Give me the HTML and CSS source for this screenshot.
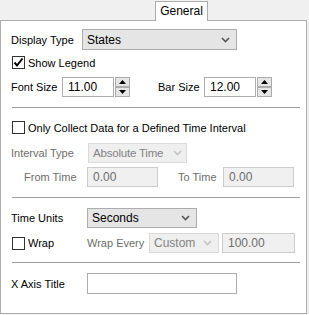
FILE: index.html
```html
<!DOCTYPE html>
<html lang="en">

<head>
    <meta charset="UTF-8">
    <title>General</title>
    <link rel="stylesheet" href="styles.css">
</head>

<body>

    <div class="tabs">
        <div class="tab">General</div>
    </div>

    <div class="panel">
        <!-- display type -->
        <div class="row row-display">
            <span class="label w71">Display Type</span>
            <div class="select sel-display">
                <span>States</span>
                <svg class="chev" width="9" height="6" viewBox="0 0 9 6"><polyline points="1,1 4.5,4.5 8,1" fill="none" stroke="#555" stroke-width="1.6"/></svg>
            </div>
        </div>

        <div class="row row-check">
            <span class="check">
                <svg width="11" height="11" viewBox="0 0 11 11"><polyline points="1.5,5.5 4,8.5 9.5,1.5" fill="none" stroke="#000" stroke-width="2"/></svg>
            </span>
            <span class="label">Show Legend</span>
        </div>

        <div class="row row-size">
            <span class="label w51">Font Size</span>
            <div class="input num">11.00</div>
            <div class="spin">
                <span class="spin-btn"><svg width="7" height="4" viewBox="0 0 7 4"><polygon points="0,4 3.5,0 7,4" fill="#000"/></svg></span>
                <span class="spin-btn"><svg width="7" height="4" viewBox="0 0 7 4"><polygon points="0,0 3.5,4 7,0" fill="#000"/></svg></span>
            </div>
            <span class="label lbl-bar">Bar Size</span>
            <div class="input num">12.00</div>
            <div class="spin">
                <span class="spin-btn"><svg width="7" height="4" viewBox="0 0 7 4"><polygon points="0,4 3.5,0 7,4" fill="#000"/></svg></span>
                <span class="spin-btn"><svg width="7" height="4" viewBox="0 0 7 4"><polygon points="0,0 3.5,4 7,0" fill="#000"/></svg></span>
            </div>
        </div>

        <div class="sep sep1"></div>

        <!-- time interval -->
        <div class="row row-interval">
            <span class="check"></span>
            <span class="label">Only Collect Data for a Defined Time Interval</span>
        </div>

        <div class="row row-itype">
            <span class="label off w76">Interval Type</span>
            <div class="select disabled sel-itype">
                <span>Absolute Time</span>
                <svg class="chev" width="9" height="6" viewBox="0 0 9 6"><polyline points="1,1 4.5,4.5 8,1" fill="none" stroke="#c4c4c4" stroke-width="1.6"/></svg>
            </div>
        </div>

        <div class="row row-from">
            <span class="label off lbl-from">From Time</span>
            <div class="input disabled txt-time">0.00</div>
            <span class="label off lbl-to">To Time</span>
            <div class="input disabled txt-time">0.00</div>
        </div>

        <div class="sep sep2"></div>

        <!-- time units -->
        <div class="row row-units">
            <span class="label w76">Time Units</span>
            <div class="select sel-units">
                <span>Seconds</span>
                <svg class="chev" width="9" height="6" viewBox="0 0 9 6"><polyline points="1,1 4.5,4.5 8,1" fill="none" stroke="#555" stroke-width="1.6"/></svg>
            </div>
        </div>

        <div class="row row-wrap">
            <span class="check"></span>
            <span class="label lbl-wrap">Wrap</span>
            <span class="label off lbl-every">Wrap Every</span>
            <div class="select disabled sel-custom">
                <span>Custom</span>
                <svg class="chev" width="9" height="6" viewBox="0 0 9 6"><polyline points="1,1 4.5,4.5 8,1" fill="none" stroke="#c4c4c4" stroke-width="1.6"/></svg>
            </div>
            <div class="input disabled txt-wrap">100.00</div>
        </div>

        <div class="sep sep3"></div>

        <div class="row row-title">
            <span class="label w76">X Axis Title</span>
            <div class="input txt-title"></div>
        </div>
    </div>

</body>

</html>
```

FILE: styles.css
```css
body {
    font-family: 'Liberation Sans', Arial, sans-serif;
    font-size: 11px;
    color: #000;
    background-color: #f0f0f0;
    margin: 0;
    padding: 0;
    width: 309px;
    height: 315px;
    overflow: hidden;
}

.tabs {
    display: flex;
    height: 20px;
    padding-left: 155px;
}

.tab {
    width: 51px;
    height: 19px;
    margin-top: 1px;
    border: 1px solid #adadad;
    border-bottom: none;
    background-color: #fff;
    text-align: center;
    line-height: 18px;
    font-size: 12px;
    position: relative;
    z-index: 1;
    margin-bottom: -1px;
}

.panel {
    height: 292px;
    border: 1px solid #adadad;
    background-color: #fff;
    padding: 0 0 0 10px;
    box-sizing: content-box;
    width: 295px;
}

.row {
    display: flex;
    align-items: center;
}

.label {
    white-space: nowrap;
}

.off {
    color: #6d6d6d;
}

.w51 { width: 51px; }
.w71 { width: 71px; }
.w76 { width: 76px; }

/* controls */
.select {
    display: flex;
    align-items: center;
    justify-content: space-between;
    box-sizing: border-box;
    height: 21px;
    padding: 0 6px 0 4px;
    border: 1px solid #acacac;
    background-color: #e5e5e5;
    font-size: 12px;
    white-space: nowrap;
}

.select.disabled {
    border-color: #d9d9d9;
    background-color: #efefef;
    color: #838383;
}

.input {
    box-sizing: border-box;
    height: 20px;
    border: 1px solid #abadb3;
    background-color: #fff;
    padding: 0 0 0 5px;
    line-height: 18px;
    font-size: 12px;
}

.input.disabled {
    border-color: #cccccc;
    background-color: #f0f0f0;
    color: #6d6d6d;
}

.check {
    display: flex;
    align-items: center;
    justify-content: center;
    box-sizing: border-box;
    width: 13px;
    height: 13px;
    margin: 0 3px 0 1px;
    border: 1px solid #333;
    background-color: #fff;
}

.spin {
    display: flex;
    flex-direction: column;
    justify-content: space-between;
    width: 15px;
    height: 20px;
    margin-left: 1px;
}

.spin-btn {
    display: flex;
    align-items: center;
    justify-content: center;
    box-sizing: border-box;
    height: 10px;
    border: 1px solid #acacac;
    background-color: #e5e5e5;
}

.sep {
    height: 1px;
    width: 288px;
    margin-left: 1px;
    background-color: #a0a0a0;
}

/* row positions */
.row-display { margin-top: 8px; height: 21px; }
.sel-display { width: 155px; }

.row-check { margin-top: 6px; height: 13px; }

.row-size { margin-top: 8px; height: 20px; }
.row-size .num { width: 52px; }
.lbl-bar { margin-left: 28px; width: 46px; }

.sep1 { margin-top: 10px; }

.row-interval { margin-top: 13px; height: 13px; }

.row-itype { margin-top: 9px; height: 20px; }
.sel-itype { width: 99px; height: 20px; margin-left: 1px; font-size: 11.5px; letter-spacing: -0.2px; padding-right: 4px; }

.row-from { margin-top: 4px; height: 20px; }
.lbl-from { margin-left: 13px; width: 63px; }
.txt-time { width: 71px; }
.lbl-to { margin-left: 20px; width: 45px; }

.sep2 { margin-top: 10px; }

.row-units { margin-top: 10px; height: 20px; }
.sel-units { width: 110px; height: 20px; }

.row-wrap { margin-top: 5px; height: 20px; }
.lbl-wrap { width: 59px; }
.lbl-every { width: 62px; }
.sel-custom { width: 70px; height: 20px; }
.txt-wrap { width: 73px; margin-left: 3px; }

.sep3 { margin-top: 9px; }

.row-title { margin-top: 10px; height: 21px; }
.txt-title { width: 150px; height: 21px; }
```
